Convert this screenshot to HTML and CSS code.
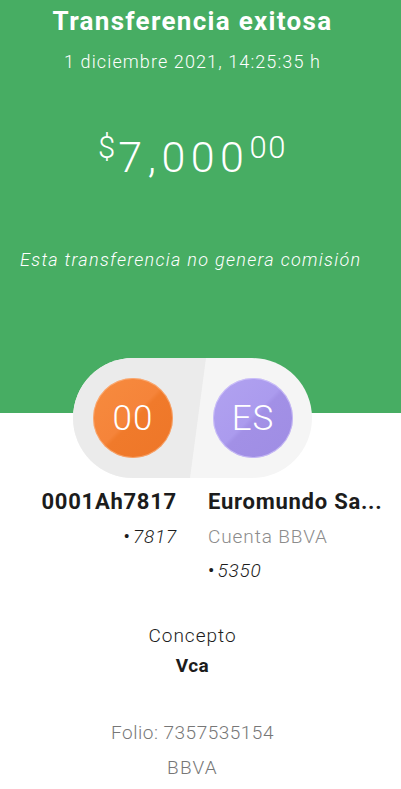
FILE: index.html
```html
<!DOCTYPE html>
<html lang="es">
<head>
<meta charset="utf-8">
<title>Transferencia exitosa</title>
<link rel="stylesheet" href="styles.css">
</head>
<body>
<header class="hero">
  <div class="inner">
    <h1 class="title">Transferencia exitosa</h1>
    <p class="date">1 diciembre 2021, 14:25:35 h</p>
    <p class="amount"><span class="cur">$</span><span class="whole">7,000</span><span class="cents">00</span></p>
    <p class="note">Esta transferencia no genera comisión</p>
  </div>
</header>
<main class="page">
  <div class="pill">
    <div class="avatar orange">00</div>
    <div class="avatar purple">ES</div>
  </div>
  <div class="parties">
    <div class="party from">
      <div class="name">0001Ah7817</div>
      <div class="acct">•<i>7817</i></div>
    </div>
    <div class="party to">
      <div class="name">Euromundo Sa...</div>
      <div class="bank">Cuenta BBVA</div>
      <div class="acct">•<i>5350</i></div>
    </div>
  </div>
  <div class="concept">
    <div class="label">Concepto</div>
    <div class="value">Vca</div>
  </div>
  <div class="folio">
    <div>Folio: 7357535154</div>
    <div class="bbva">BBVA</div>
  </div>
</main>
</body>
</html>
```
FILE: styles.css
```css
* { box-sizing: border-box; }
html, body { margin: 0; padding: 0; }
body {
  font-family: Roboto, "Liberation Sans", sans-serif;
  background: #ffffff;
  color: #1c1c1c;
  width: 401px;
}
.hero {
  background: #47ad63;
  height: 413px;
  color: #ffffff;
}
.inner {
  width: 385px;
  text-align: center;
  padding-top: 5px;
}
.title {
  margin: 0;
  font-size: 26px;
  line-height: 32px;
  font-weight: 700;
  letter-spacing: 1.3px;
}
.date {
  margin: 13px 0 0;
  font-size: 18px;
  line-height: 24px;
  font-weight: 300;
  letter-spacing: 1.1px;
}
.amount {
  margin: 58px 0 0;
  font-size: 43px;
  line-height: 50px;
  font-weight: 300;
  display: flex;
  justify-content: center;
  align-items: flex-start;
}
.cur {
  font-size: 31px;
  line-height: 30px;
  margin-top: 1px;
  margin-right: 3px;
}
.whole { letter-spacing: 5.5px; }
.cents {
  font-size: 31px;
  line-height: 30px;
  margin-top: 1px;
  letter-spacing: 1.5px;
}
.note {
  margin: 66px 0 0;
  font-size: 18px;
  line-height: 24px;
  font-weight: 300;
  font-style: italic;
  text-align: left;
  padding-left: 20px;
  letter-spacing: 1.3px;
}
.page {
  width: 385px;
}
.pill {
  position: relative;
  margin: -55px auto 0;
  width: 239px;
  height: 120px;
  border-radius: 60px;
  background: #f5f5f5;
  overflow: hidden;
  display: flex;
  justify-content: space-between;
  align-items: center;
  padding: 0 19px 0 20px;
}
.pill::before {
  content: "";
  position: absolute;
  inset: 0;
  background: #ebebeb;
  clip-path: polygon(0 0, 133px 0, 117px 100%, 0 100%);
}
.avatar {
  position: relative;
  width: 80px;
  height: 80px;
  border-radius: 50%;
  display: flex;
  align-items: center;
  justify-content: center;
  color: #ffffff;
  font-size: 35px;
  font-weight: 300;
  letter-spacing: 1px;
}
.orange {
  background: linear-gradient(135deg, #f78b3e 0%, #f5843a 48%, #f07a2b 52%, #ee7628 100%);
  box-shadow: inset 0 0 0 1px rgba(255, 200, 160, 0.5);
}
.purple {
  background: linear-gradient(135deg, #b1a2f0 0%, #ab9bee 48%, #a290e6 52%, #9f8de4 100%);
  box-shadow: inset 0 0 0 1px rgba(220, 210, 255, 0.6);
}
.parties {
  display: grid;
  grid-template-columns: 1fr 1fr;
  column-gap: 31px;
  margin-top: 10px;
}
.from { text-align: right; }
.to { text-align: left; }
.name {
  font-size: 22px;
  line-height: 28px;
  font-weight: 700;
  white-space: nowrap;
  letter-spacing: 0.75px;
}
.bank, .acct {
  font-size: 19px;
  line-height: 26px;
  margin-top: 8px;
}
.bank { color: #8c8c8c; font-weight: 300; letter-spacing: 0.9px; }
.acct i { font-weight: 300; margin-left: 3px; letter-spacing: 0.8px; }
.concept {
  text-align: center;
  margin-top: 39px;
  font-size: 19px;
  line-height: 26px;
}
.label { font-weight: 300; letter-spacing: 1px; }
.value { font-weight: 700; margin-top: 4px; letter-spacing: 0.5px; }
.folio {
  text-align: center;
  margin-top: 41px;
  font-size: 19px;
  line-height: 26px;
  color: #777777;
  font-weight: 300;
  letter-spacing: 0.5px;
}
.bbva { margin-top: 9px; letter-spacing: 1.2px; }
```
